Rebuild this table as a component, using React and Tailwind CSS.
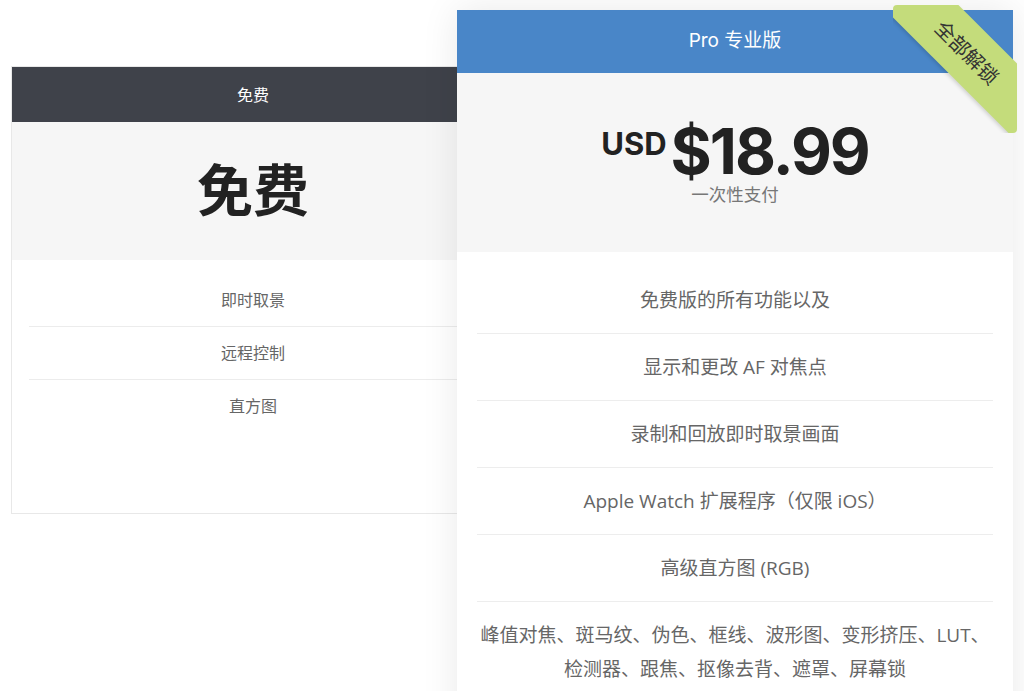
import React from "react";

const body = {
  fontFamily: "'Open Sans', 'Noto Sans CJK SC', sans-serif",
};
const head = {
  fontFamily: "Inter, 'Noto Sans CJK SC', sans-serif",
};

const freeFeatures = ["即时取景", "远程控制", "直方图"];
const proFeatures = [
  ["免费版的所有功能以及"],
  ["显示和更改 AF 对焦点"],
  ["录制和回放即时取景画面"],
  ["Apple Watch 扩展程序（仅限 iOS）"],
  ["高级直方图 (RGB)"],
  ["峰值对焦、斑马纹、伪色、框线、波形图、变形挤压、LUT、", "检测器、跟焦、抠像去背、遮罩、屏幕锁"],
];

export default function App() {
  return (
    <div className="h-[691px] w-[1024px] overflow-hidden bg-white" style={body}>
      <div className="flex items-start pl-[11px] pt-[10px]">
        {/* Free card */}
        <div className="mt-[56px] w-[484px] shrink-0 border border-[#e8e8e8] bg-white">
          <div
            className="flex h-[55px] items-center justify-center bg-[#3f424a] text-[16px] text-white"
            style={head}
          >
            免费
          </div>
          <div
            className="flex h-[138px] items-center justify-center bg-[#f6f6f6] text-[56px] font-bold leading-none text-[#222]"
            style={head}
          >
            免费
          </div>
          <div className="px-[17px] pb-[81px] pt-[14px]">
            {freeFeatures.map((f, i) => (
              <div
                key={f}
                className={
                  "py-[13px] text-center text-[16px] leading-[26px] text-[#666] " +
                  (i < freeFeatures.length - 1 ? "border-b border-[#ececec]" : "")
                }
              >
                {f}
              </div>
            ))}
          </div>
        </div>

        {/* Pro card */}
        <div className="relative z-10 ml-[-38px] w-[556px] shrink-0 bg-white shadow-[0_0_35px_rgba(0,0,0,0.09)]">
          <div
            className="flex h-[63px] items-center justify-center bg-[#4986c8] text-[19px] text-white"
            style={head}
          >
            Pro 专业版
          </div>
          <div className="h-[179px] bg-[#f6f6f6] pt-[47px]" style={head}>
            <div className="flex items-start justify-center text-[#222]">
              <span className="mr-[4px] mt-[8px] text-[31px] font-bold leading-none">
                USD
              </span>
              <span className="text-[63px] font-bold leading-none tracking-[-2px]">
                $18.99
              </span>
            </div>
            <div
              className="mt-[1px] text-center text-[17.5px] leading-[20px] text-[#777]"
              style={body}
            >
              一次性支付
            </div>
          </div>
          <div className="px-[20px] pb-[40px] pt-[15px]">
            {proFeatures.map((lines, i) => (
              <div
                key={lines[0]}
                className={
                  "py-[16px] text-center text-[19px] leading-[34px] text-[#666] " +
                  (i < proFeatures.length - 1 ? "border-b border-[#ededed]" : "")
                }
              >
                {lines.map((l, j) => (
                  <div key={j} className="whitespace-nowrap">
                    {l}
                  </div>
                ))}
              </div>
            ))}
          </div>

          {/* Ribbon */}
          <div className="absolute right-[-4px] top-[-5px] h-[128px] w-[124px] overflow-hidden rounded-[4px]">
            <div
              className="absolute left-[-36px] top-[20px] flex h-[55px] w-[220px] rotate-45 items-center justify-center bg-[#c4dc7b] text-[20px] text-[#333] shadow-[0_2px_4px_rgba(0,0,0,0.15)]"
              style={body}
            >
              全部解锁
            </div>
          </div>
        </div>
      </div>
    </div>
  );
}
